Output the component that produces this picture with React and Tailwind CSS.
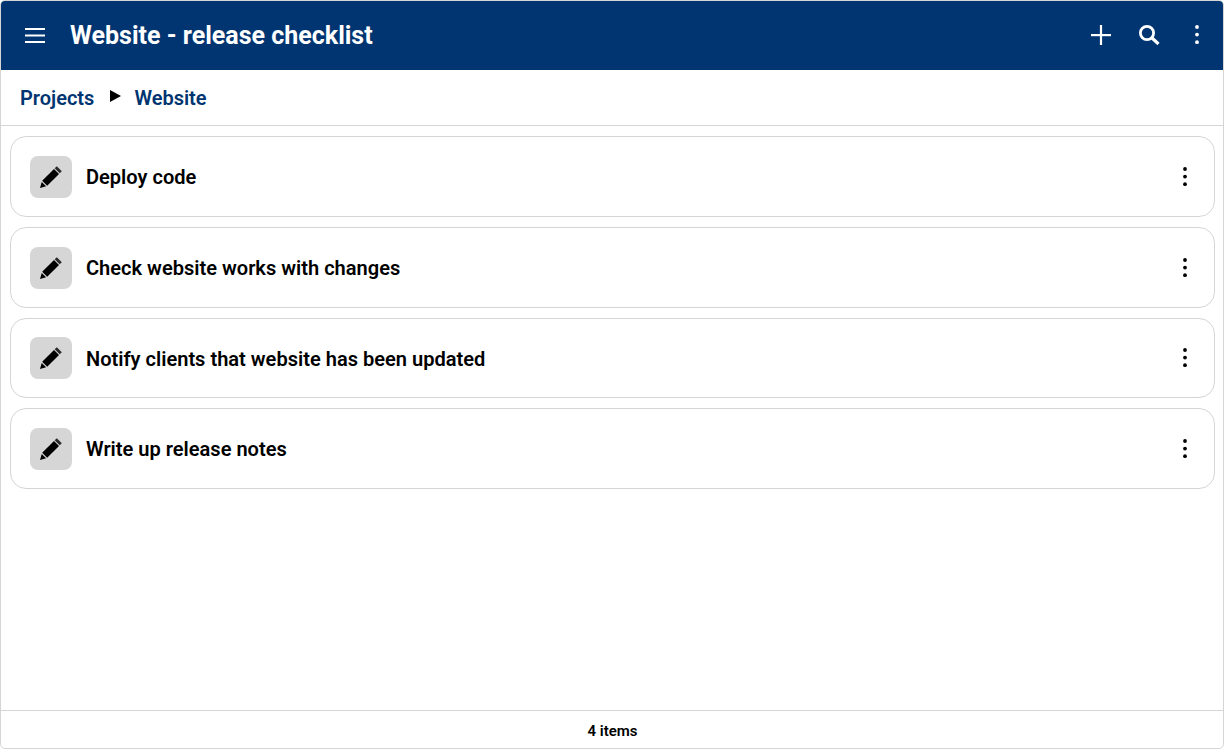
import React from 'react';

const items = [
  'Deploy code',
  'Check website works with changes',
  'Notify clients that website has been updated',
  'Write up release notes',
];

const PencilIcon = () => (
  <svg width="22" height="22" viewBox="0 0 22 22" fill="#000">
    <path d="M0 22 L1.7 15.9 L6.1 20.3 Z" />
    <path d="M2.2 14.8 L14 3 L19 8 L7.2 19.8 Z" />
    <path d="M14.7 2.3 L16.8 0.2 L21.8 5.2 L19.7 7.3 Z" fill="#2a2a2a" />
  </svg>
);

const DotsIcon = ({ color = '#000' }) => (
  <svg width="4" height="20" viewBox="0 0 4 20" fill={color}>
    <circle cx="2" cy="2" r="1.9" />
    <circle cx="2" cy="9.6" r="1.9" />
    <circle cx="2" cy="17.2" r="1.9" />
  </svg>
);

const ChecklistRow = ({ title }) => (
  <div className="flex h-[80.67px] items-center rounded-[16px] border border-[#d5d5d5] pl-[19px] pr-[27px] pt-[1px]">
    <div className="flex h-[42px] w-[42px] items-center justify-center rounded-[8px] bg-[#d6d6d6]">
      <PencilIcon />
    </div>
    <span className="ml-[14px] flex-1 pt-[0.4px] text-[20.06px] font-semibold text-black">{title}</span>
    <DotsIcon />
  </div>
);

export default function App() {
  return (
    <div className="flex h-[749px] w-[1224px] flex-col overflow-hidden rounded-[5px] border border-[#d5d5d5] bg-white font-['Roboto',sans-serif]">
      <header className="flex h-[69px] shrink-0 items-center bg-[#003571] pl-[24px] pr-[24px] text-white">
        <svg className="mb-[1px]" width="20" height="15" viewBox="0 0 20 15" fill="#fff">
          <rect x="0" y="0" width="20" height="2" />
          <rect x="0" y="6.5" width="20" height="2" />
          <rect x="0" y="13" width="20" height="2" />
        </svg>
        <h1 className="ml-[25px] flex-1 text-[25px] font-bold">Website - release checklist</h1>
        <svg className="mb-[1px]" width="20" height="20" viewBox="0 0 20 20" fill="#fff">
          <rect x="0" y="9" width="20" height="2.2" />
          <rect x="8.9" y="0" width="2.2" height="20" />
        </svg>
        <svg className="ml-[28px] mb-[2px]" width="21" height="20" viewBox="0 0 21 20" fill="none" stroke="#fff">
          <circle cx="8" cy="8" r="6.6" strokeWidth="2.8" />
          <path d="M13 13 L19.5 19" strokeWidth="3.2" />
        </svg>
        <div className="ml-[35px] mb-[2px] flex">
          <DotsIcon color="#fff" />
        </div>
      </header>

      <nav className="flex h-[56px] shrink-0 items-center border-b border-[#d5d5d5] pl-[19px] text-[20px] font-semibold text-[#003571]">
        <span>Projects</span>
        <svg className="ml-[16px] mr-[13px] mb-[3px]" width="11" height="12" viewBox="0 0 11 12" fill="#000">
          <path d="M0 0 L11 6 L0 12 Z" />
        </svg>
        <span>Website</span>
      </nav>

      <main className="flex flex-1 flex-col gap-[10px] pl-[9px] pr-[8px] pt-[10.33px]">
        {items.map((item) => (
          <ChecklistRow key={item} title={item} />
        ))}
      </main>

      <footer className="flex h-[38px] shrink-0 items-center justify-center border-t border-[#d5d5d5] pl-[1px] pt-[3px] text-[15px] font-semibold text-black">
        4 items
      </footer>
    </div>
  );
}
